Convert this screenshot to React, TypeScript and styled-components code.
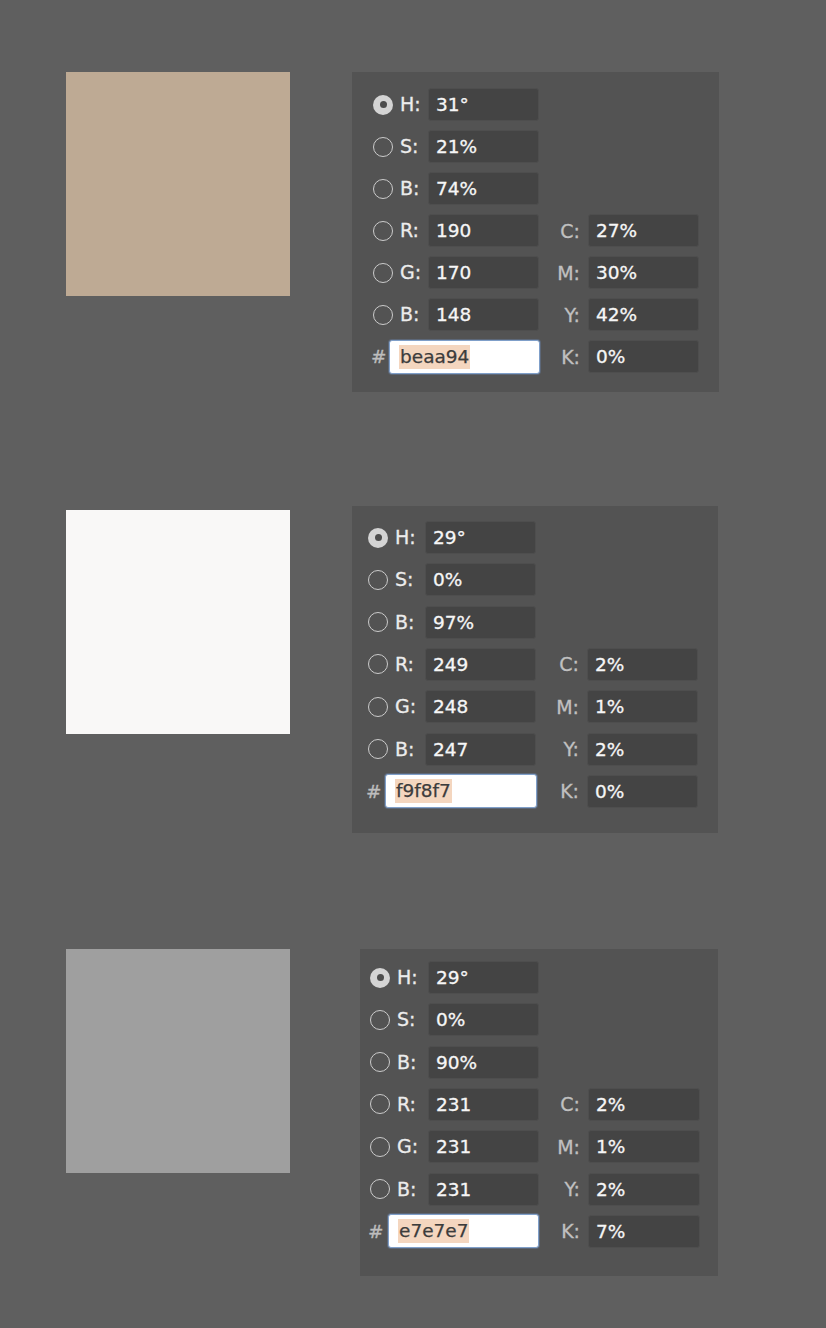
import React from "react";
import styled, { createGlobalStyle } from "styled-components";

const GlobalStyle = createGlobalStyle`
  html, body {
    margin: 0;
    padding: 0;
    background: #5f5f5f;
  }
  body {
    font-family: "DejaVu Sans", "Liberation Sans", sans-serif;
  }
`;

const Page = styled.div`
  width: 826px;
  min-height: 1328px;
  box-sizing: border-box;
  padding: 72px 0 0 66px;
  display: flex;
  flex-direction: column;
  background: #5f5f5f;
`;

const Section = styled.section<{ $top: number }>`
  display: flex;
  align-items: flex-start;
  margin-top: ${(p) => p.$top}px;
`;

const Swatch = styled.div<{ $color: string; $offset: number }>`
  flex-shrink: 0;
  width: 224px;
  height: 224px;
  margin-top: ${(p) => p.$offset}px;
  background: ${(p) => p.$color};
`;

const Panel = styled.div<{
  $left: number;
  $width: number;
  $height: number;
  $padTop: number;
  $padLeft: number;
  $gap: number;
}>`
  margin-left: ${(p) => p.$left}px;
  width: ${(p) => p.$width}px;
  height: ${(p) => p.$height}px;
  box-sizing: border-box;
  padding: ${(p) => p.$padTop}px 0 0 ${(p) => p.$padLeft}px;
  background: #535353;
  display: flex;
  flex-direction: column;
  gap: ${(p) => p.$gap}px;
`;

const Row = styled.div`
  display: flex;
  align-items: center;
  height: 33px;
`;

const ChoiceCell = styled.label<{ $w: number }>`
  width: ${(p) => p.$w}px;
  display: flex;
  align-items: center;
  gap: 7px;
  flex-shrink: 0;
`;

const Radio = styled.span<{ $on: boolean }>`
  position: relative;
  width: 20px;
  height: 20px;
  box-sizing: border-box;
  border-radius: 50%;
  flex-shrink: 0;
  border: ${(p) => (p.$on ? "none" : "1.6px solid #cbcbcb")};
  background: ${(p) => (p.$on ? "#d4d4d4" : "transparent")};
  &::after {
    content: "";
    display: ${(p) => (p.$on ? "block" : "none")};
    position: absolute;
    left: 50%;
    top: 50%;
    width: 7px;
    height: 7px;
    margin: -3.5px 0 0 -3.5px;
    border-radius: 50%;
    background: #4d4d4d;
  }
`;

const ChannelLabel = styled.span`
  font-size: 19px;
  line-height: 1;
  color: #ececec;
  -webkit-text-stroke: 0.3px #ececec;
`;

const ValueBox = styled.div<{ $w: number }>`
  width: ${(p) => p.$w}px;
  height: 33px;
  box-sizing: border-box;
  flex-shrink: 0;
  border: 1px solid #4e4e4e;
  border-radius: 3px;
  background: #444444;
  padding-left: 7px;
  display: flex;
  align-items: center;
  font-size: 18.5px;
  color: #f6f6f6;
  -webkit-text-stroke: 0.3px #f6f6f6;
`;

const CmykLabel = styled.span<{ $w: number }>`
  width: ${(p) => p.$w}px;
  box-sizing: border-box;
  padding-right: 8px;
  text-align: right;
  font-size: 19px;
  color: #c0c0c0;
  -webkit-text-stroke: 0.3px #c0c0c0;
  flex-shrink: 0;
`;

const HashCell = styled.span<{ $w: number }>`
  width: ${(p) => p.$w + 2}px;
  margin-left: -2px;
  font-size: 18.5px;
  color: #bdbdbd;
  -webkit-text-stroke: 0.3px #bdbdbd;
  flex-shrink: 0;
`;

const HexBox = styled.div<{ $w: number }>`
  width: ${(p) => p.$w}px;
  height: 34px;
  box-sizing: border-box;
  flex-shrink: 0;
  border: 1px solid #7f9fc9;
  border-radius: 3px;
  background: #ffffff;
  padding-left: 9px;
  display: flex;
  align-items: center;
  box-shadow: 0 0 0 1px rgba(110, 140, 190, 0.35);
`;

const Selection = styled.span`
  background: #f4d6bf;
  color: #3c3c3c;
  -webkit-text-stroke: 0.25px #3c3c3c;
  font-size: 18.5px;
  line-height: 24px;
  padding: 0 1px;
`;

type Cfg = {
  swatch: string;
  top: number;
  offset: number;
  left: number;
  width: number;
  height: number;
  padTop: number;
  padLeft: number;
  gap: number;
  labelW: number;
  hashW: number;
  hexW: number;
  cmykLabelW: number;
  cmykW: number;
  values: string[];
  hex: string;
  cmyk: string[];
};

const sections: Cfg[] = [
  {
    swatch: "#beaa94",
    top: 0,
    offset: 0,
    left: 62,
    width: 367,
    height: 320,
    padTop: 16,
    padLeft: 21,
    gap: 9,
    labelW: 55,
    hashW: 16,
    hexW: 151,
    cmykLabelW: 49,
    cmykW: 111,
    values: ["31°", "21%", "74%", "190", "170", "148"],
    hex: "beaa94",
    cmyk: ["27%", "30%", "42%", "0%"],
  },
  {
    swatch: "#f9f8f7",
    top: 114,
    offset: 4,
    left: 62,
    width: 366,
    height: 327,
    padTop: 15,
    padLeft: 16,
    gap: 9.33,
    labelW: 57,
    hashW: 17,
    hexW: 152,
    cmykLabelW: 51,
    cmykW: 111,
    values: ["29°", "0%", "97%", "249", "248", "247"],
    hex: "f9f8f7",
    cmyk: ["2%", "1%", "2%", "0%"],
  },
  {
    swatch: "#9f9f9f",
    top: 116,
    offset: 0,
    left: 70,
    width: 358,
    height: 327,
    padTop: 12,
    padLeft: 10,
    gap: 9.33,
    labelW: 58,
    hashW: 18,
    hexW: 151,
    cmykLabelW: 49,
    cmykW: 112,
    values: ["29°", "0%", "90%", "231", "231", "231"],
    hex: "e7e7e7",
    cmyk: ["2%", "1%", "2%", "7%"],
  },
];

const channels = ["H:", "S:", "B:", "R:", "G:", "B:"];
const cmykNames = ["C:", "M:", "Y:", "K:"];

function ColorPanel({ cfg }: { cfg: Cfg }) {
  const hexOverhang = cfg.hashW + cfg.hexW - (cfg.labelW + 111);
  return (
    <Panel
      $left={cfg.left}
      $width={cfg.width}
      $height={cfg.height}
      $padTop={cfg.padTop}
      $padLeft={cfg.padLeft}
      $gap={cfg.gap}
    >
      {channels.map((ch, i) => (
        <Row key={i}>
          <ChoiceCell $w={cfg.labelW}>
            <Radio $on={i === 0} />
            <ChannelLabel>{ch}</ChannelLabel>
          </ChoiceCell>
          <ValueBox $w={111}>{cfg.values[i]}</ValueBox>
          {i >= 3 && (
            <>
              <CmykLabel $w={cfg.cmykLabelW}>{cmykNames[i - 3]}</CmykLabel>
              <ValueBox $w={cfg.cmykW}>{cfg.cmyk[i - 3]}</ValueBox>
            </>
          )}
        </Row>
      ))}
      <Row>
        <HashCell $w={cfg.hashW}>#</HashCell>
        <HexBox $w={cfg.hexW}>
          <Selection>{cfg.hex}</Selection>
        </HexBox>
        <CmykLabel $w={cfg.cmykLabelW - hexOverhang}>{cmykNames[3]}</CmykLabel>
        <ValueBox $w={cfg.cmykW}>{cfg.cmyk[3]}</ValueBox>
      </Row>
    </Panel>
  );
}

export default function App() {
  return (
    <>
      <GlobalStyle />
      <Page>
        {sections.map((cfg, i) => (
          <Section key={i} $top={cfg.top}>
            <Swatch $color={cfg.swatch} $offset={cfg.offset} />
            <ColorPanel cfg={cfg} />
          </Section>
        ))}
      </Page>
    </>
  );
}
